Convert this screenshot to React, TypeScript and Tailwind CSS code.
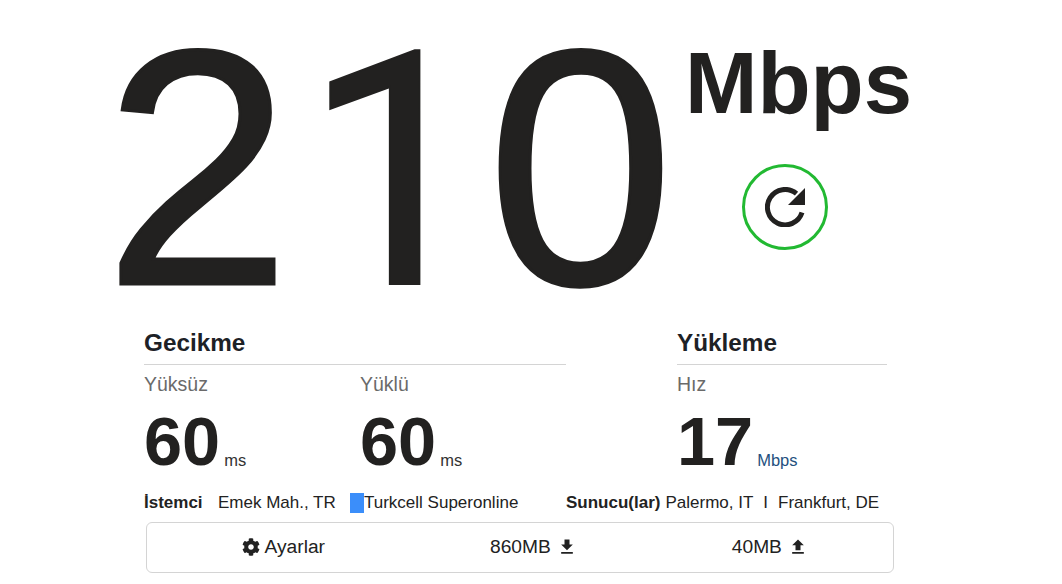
import { FaCog } from 'react-icons/fa';
import { MdFileDownload, MdFileUpload } from 'react-icons/md';

function Metric({ label, value, unit, unitClass }: { label: string; value: string; unit: string; unitClass?: string }) {
  return (
    <div className="w-[216px] shrink-0">
      <div className="h-[24px] text-[19.5px] leading-[24px] text-[#6a6a6a]">{label}</div>
      <div className="mt-[14px] flex h-[64px] items-end leading-none">
        <span className="text-[68.5px] leading-[64px] font-bold text-[#222120]">{value}</span>
        <span className={`mb-[4px] ml-[4px] text-[16.5px] leading-[20px] ${unitClass ?? 'text-[#333]'}`}>{unit}</span>
      </div>
    </div>
  );
}

export default function App() {
  return (
    <div className="h-[584px] w-[1062px] overflow-hidden bg-white font-['Liberation_Sans',Arial,sans-serif]">
      <div className="flex h-[322px] pl-[104px]">
        {/* liberation's 1 has a foot, the reference's doesn't, so the 1 comes from roboto */}
        <div className="flex h-[322px] w-[572px] items-baseline pt-[18px] text-[336px] leading-[300px] text-[#222120] [-webkit-text-stroke:3px_#222120]">
          <span className="w-[188px]">2</span>
          <span className="w-[195px] pl-[11px] font-['Roboto',sans-serif] text-[327px] [-webkit-text-stroke:2px_#222120]">1</span>
          <span>0</span>
        </div>
        <div className="ml-[9px] flex w-[236px] flex-col items-start">
          <div className="mt-[33px] text-[87px] leading-[100px] font-bold text-[#222120]">Mbps</div>
          <button className="mt-[31px] ml-[57px] flex h-[86px] w-[86px] items-center justify-center rounded-full border-[3px] border-[#22b932]">
            <svg viewBox="0 0 40 40" className="h-[40px] w-[40px]">
              <path d="M31.5 6.6A17.7 17.7 0 1 0 37 25.5" fill="none" stroke="#222120" strokeWidth="5" />
              <path d="M40 1V18H23Z" fill="#222120" />
            </svg>
          </button>
        </div>
      </div>

      <div className="flex pl-[144px]">
        <div className="w-[422px]">
          <div className="h-[43px] border-b border-[#d4d4d4] text-[24.3px] leading-[42px] font-bold text-[#1d2126]">Gecikme</div>
          <div className="mt-[7px] flex">
            <Metric label="Yüksüz" value="60" unit="ms" />
            <Metric label="Yüklü" value="60" unit="ms" />
          </div>
        </div>
        <div className="ml-[111px] w-[210px]">
          <div className="h-[43px] border-b border-[#d4d4d4] text-[24.3px] leading-[42px] font-bold text-[#1d2126]">Yükleme</div>
          <div className="mt-[7px] flex">
            <Metric label="Hız" value="17" unit="Mbps" unitClass="text-[#24507e]" />
          </div>
        </div>
      </div>

      <div className="mt-[19px] flex h-[20px] items-center pl-[144px] text-[17px] leading-[20px] text-[#222]">
        <span className="w-[74px] font-bold">İstemci</span>
        <span className="w-[132px]">Emek Mah., TR</span>
        <span className="h-[20px] w-[14px] bg-[#3b8efa]" />
        <span className="w-[202px]">Turkcell Superonline</span>
        <span className="font-bold">Sunucu(lar)</span>
        <span className="ml-[5px]">Palermo, IT</span>
        <span className="ml-[10px]">I</span>
        <span className="ml-[10px]">Frankfurt, DE</span>
      </div>

      <div className="mt-[9px] ml-[146px] flex h-[51px] w-[748px] items-center rounded-[6px] border border-[#d4d4d4] text-[19.2px] text-[#222]">
        <div className="flex w-[178px] items-center justify-end gap-[5px]">
          <FaCog className="text-[18px]" />
          <span>Ayarlar</span>
        </div>
        <div className="ml-[165px] flex items-center gap-[6px]">
          <span>860MB</span>
          <MdFileDownload className="text-[20px]" />
        </div>
        <div className="ml-[155px] flex items-center gap-[6px]">
          <span>40MB</span>
          <MdFileUpload className="text-[20px]" />
        </div>
      </div>
    </div>
  );
}
